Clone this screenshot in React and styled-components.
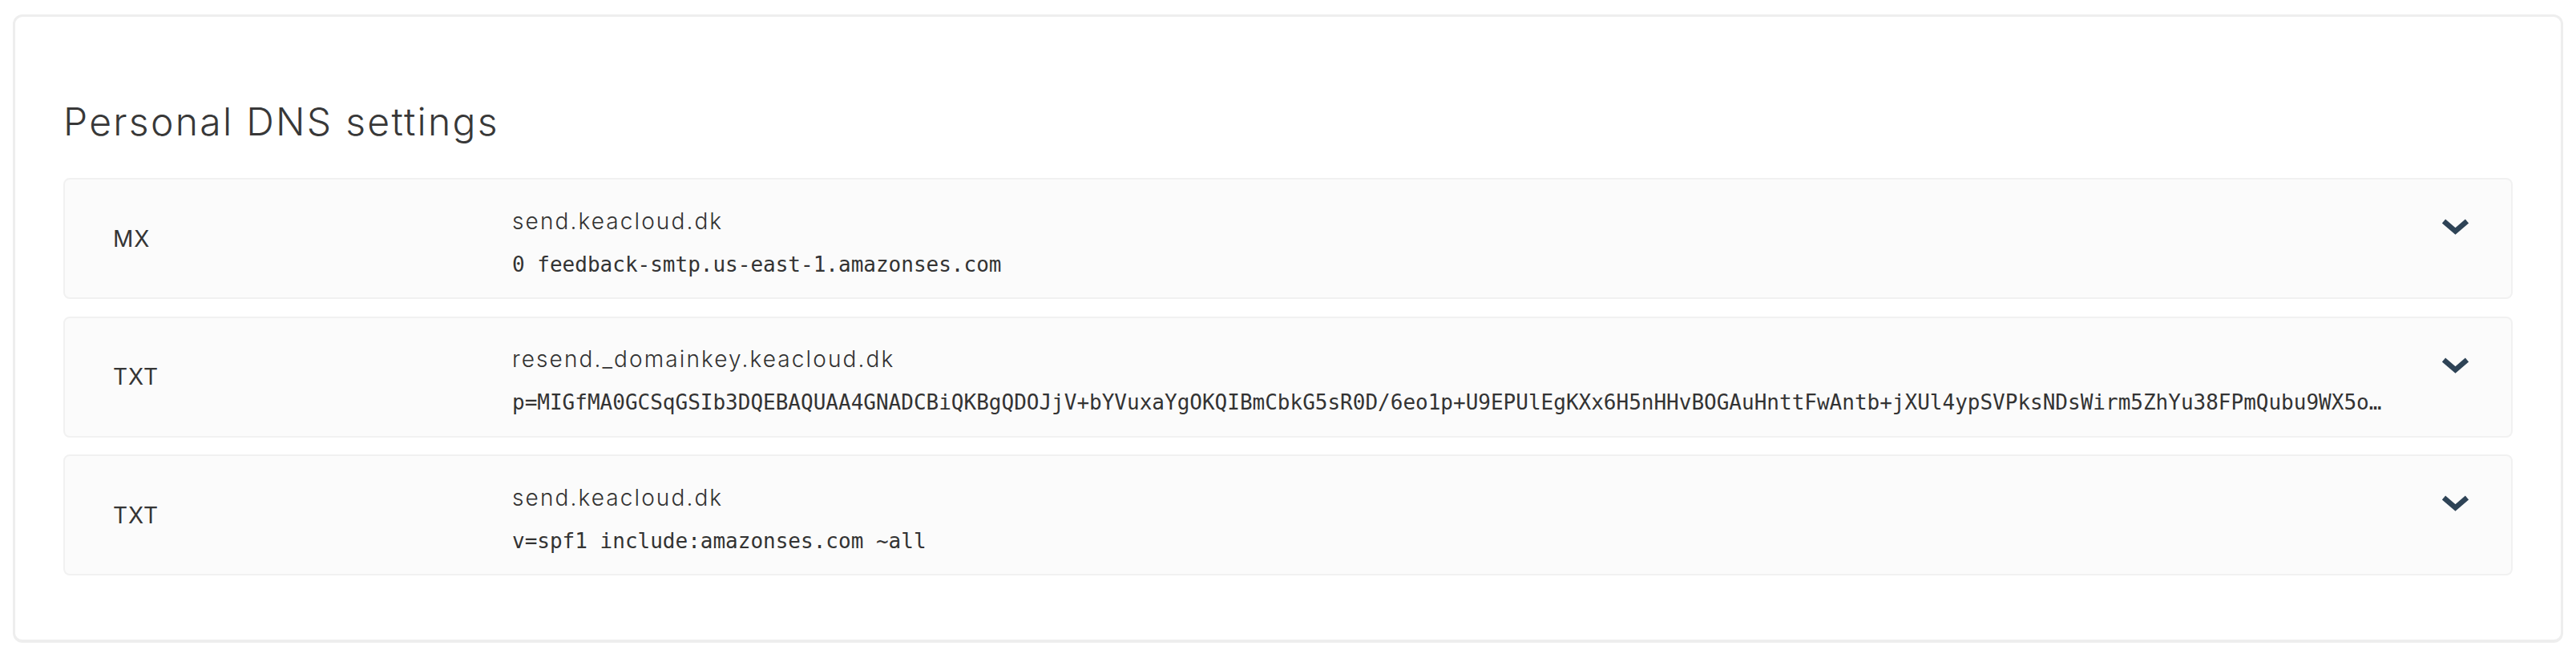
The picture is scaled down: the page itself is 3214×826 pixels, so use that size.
import styled, { createGlobalStyle } from "styled-components"

const GlobalStyle = createGlobalStyle`
  body {
    margin: 18px 16px 16px;
    background: #fff;
    font-family: "Inter", "Lato", sans-serif;
    color: #353535;
  }
`

const Card = styled.section`
  border: 3px solid #eeeeee;
  border-bottom-width: 4px;
  border-radius: 12px;
  background: #fff;
  padding: 102px 60px 80px;
`

const Title = styled.h2`
  margin: 0 0 41px;
  font-size: 48px;
  line-height: 58px;
  font-weight: 300;
  letter-spacing: 2.3px;
  color: #383838;
`

const List = styled.div`
  display: flex;
  flex-direction: column;
  gap: 21.5px;
`

const Row = styled.div`
  box-sizing: border-box;
  display: flex;
  align-items: center;
  min-height: 151px;
  padding: 0 52px 0 60px;
  background: #fbfbfb;
  border: 2px solid #f1f1f1;
  border-radius: 8px;
`

const Type = styled.div`
  flex: none;
  width: 498px;
  font-size: 28px;
  line-height: 34px;
  letter-spacing: 1px;
`

const Values = styled.div`
  flex: 1;
  min-width: 0;
  padding-top: 10px;
`

const Name = styled.div`
  font-size: 28px;
  line-height: 34px;
  font-weight: 300;
  letter-spacing: 2.1px;
  color: #333;
`

const Content = styled.div`
  margin-top: 20px;
  font-family: "DejaVu Sans Mono", monospace;
  font-size: 26px;
  line-height: 34px;
  color: #333;
  white-space: nowrap;
  overflow: hidden;
  text-overflow: ellipsis;
`

const Toggle = styled.button`
  align-self: flex-start;
  display: flex;
  flex: none;
  width: 35px;
  height: 21px;
  margin: 49px 0 0 72px;
  padding: 0;
  border: 0;
  background: none;
  color: #2e4356;
  cursor: pointer;
`

const Chevron = () => (
  <svg width="35" height="21" viewBox="0 0 35 21" fill="none">
    <polyline
      points="3,3 17.5,15.5 32,3"
      stroke="currentColor"
      strokeWidth="6.5"
      strokeLinejoin="miter"
    />
  </svg>
)

const records = [
  {
    type: "MX",
    name: "send.keacloud.dk",
    value: "0 feedback-smtp.us-east-1.amazonses.com",
  },
  {
    type: "TXT",
    name: "resend._domainkey.keacloud.dk",
    value:
      "p=MIGfMA0GCSqGSIb3DQEBAQUAA4GNADCBiQKBgQDOJjV+bYVuxaYgOKQIBmCbkG5sR0D/6eo1p+U9EPUlEgKXx6H5nHHvBOGAuHnttFwAntb+jXUl4ypSVPksNDsWirm5ZhYu38FPmQubu9WX5oQwR3kLmH7vYcTnQIDAQAB",
  },
  {
    type: "TXT",
    name: "send.keacloud.dk",
    value: "v=spf1 include:amazonses.com ~all",
  },
]

const App = () => {
  return (
    <>
      <GlobalStyle />
      <Card>
        <Title>Personal DNS settings</Title>
        <List>
          {records.map((r, i) => (
            <Row key={i}>
              <Type>{r.type}</Type>
              <Values>
                <Name>{r.name}</Name>
                <Content>{r.value}</Content>
              </Values>
              <Toggle aria-label="Show record">
                <Chevron />
              </Toggle>
            </Row>
          ))}
        </List>
      </Card>
    </>
  )
}

export default App
